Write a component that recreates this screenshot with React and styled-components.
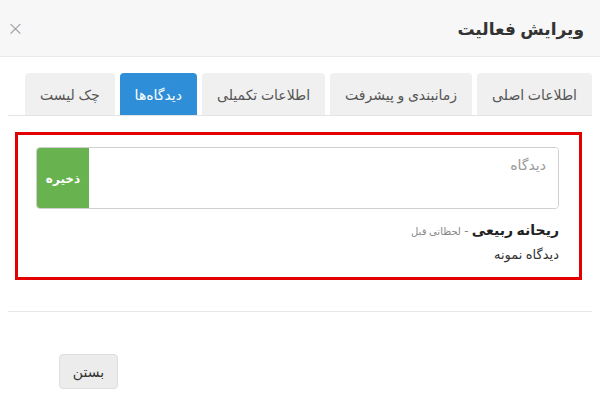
import React, { useState } from "react";
import styled, { createGlobalStyle } from "styled-components";

const tabs = ["اطلاعات اصلی", "زمانبندی و پیشرفت", "اطلاعات تکمیلی", "دیدگاه‌ها", "چک لیست"];

const App = () => {
  const [active, setActive] = useState(3);

  return (
    <>
      <GlobalStyle />
      <Modal>
        <Header>
          <Title>ویرایش فعالیت</Title>
          <CloseX>×</CloseX>
        </Header>
        <Body>
          <TabList>
            {tabs.map((t, i) => (
              <Tab key={t} $active={i === active} onClick={() => setActive(i)}>
                {t}
              </Tab>
            ))}
          </TabList>
          <Highlight>
            <InputGroup>
              <CommentField placeholder="دیدگاه" />
              <SaveBtn>ذخیره</SaveBtn>
            </InputGroup>
            <Comment>
              <Author>
                <b>ریحانه ربیعی</b>
                <Dash> - </Dash>
                <Time>لحظاتی قبل</Time>
              </Author>
              <CommentText>دیدگاه نمونه</CommentText>
            </Comment>
          </Highlight>
        </Body>
        <Footer>
          <CloseBtn>بستن</CloseBtn>
        </Footer>
      </Modal>
    </>
  );
};

export default App;

const GlobalStyle = createGlobalStyle`
  body {
    margin: 0;
    background: #fff;
    font-family: "Noto Sans", "DejaVu Sans", sans-serif;
    color: #333;
  }
`;

const Modal = styled.div`
  direction: rtl;
  width: 600px;
  height: 420px;
  background: #fff;
`;

const Header = styled.div`
  height: 56px;
  display: flex;
  align-items: center;
  justify-content: space-between;
  padding: 0 16px 0 7px;
  background: #f7f7f7;
  border-bottom: 1px solid #ebebeb;
`;

const Title = styled.h4`
  margin: 0;
  font-size: 17px;
  font-weight: bold;
  color: #333;
`;

const CloseX = styled.span`
  font-size: 20px;
  color: #999;
  line-height: 1;
  font-family: "DejaVu Sans", sans-serif;
  font-weight: 300;
`;

const Body = styled.div`
  padding: 16px 8px 0;
`;

const TabList = styled.div`
  display: flex;
  gap: 5px;
  border-bottom: 1px solid #e4e4e4;
`;

const Tab = styled.div`
  flex-shrink: 0;
  white-space: nowrap;
  height: 42px;
  display: flex;
  align-items: center;
  padding: 0 15px;
  border-radius: 4px 4px 0 0;
  font-size: 14px;
  cursor: pointer;
  background: ${(p) => (p.$active ? "#2e8fd8" : "#f0f0f0")};
  color: ${(p) => (p.$active ? "#fff" : "#555")};
`;

const Highlight = styled.div`
  margin: 16px 10px 0 7px;
  border: 3px solid #e30000;
  padding: 12px 20px 11px 18px;
`;

const InputGroup = styled.div`
  display: flex;
  height: 60px;
  border: 1px solid #d0d0d0;
  border-radius: 4px;
  overflow: hidden;
`;

const CommentField = styled.textarea`
  flex: 1;
  border: none;
  resize: none;
  outline: none;
  padding: 7px 12px;
  font-family: inherit;
  font-size: 14px;
  color: #333;
  &::placeholder {
    color: #999;
  }
`;

const SaveBtn = styled.button`
  width: 52px;
  border: none;
  background: #68b34f;
  color: #fff;
  font-family: inherit;
  font-size: 12px;
  font-weight: bold;
`;

const Comment = styled.div`
  margin-top: 10px;
`;

const Author = styled.div`
  font-size: 14px;
  line-height: 22px;
  color: #222;
`;

const Dash = styled.span`
  color: #888;
  font-size: 13px;
`;

const Time = styled.span`
  color: #888;
  font-size: 10px;
`;

const CommentText = styled.div`
  font-size: 13px;
  line-height: 24px;
  color: #333;
`;

const Footer = styled.div`
  margin: 31px 8px 0;
  border-top: 1px solid #e8e8e8;
  padding: 42px 51px 0;
  display: flex;
  justify-content: flex-end;
`;

const CloseBtn = styled.button`
  width: 59px;
  height: 35px;
  background: #ececec;
  border: 1px solid #dedede;
  border-radius: 4px;
  font-family: inherit;
  font-size: 14px;
  color: #333;
`;
